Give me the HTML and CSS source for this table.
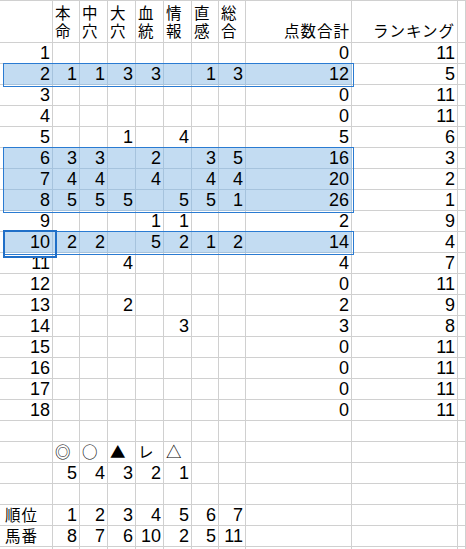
FILE: index.html
```html
<!DOCTYPE html>
<html lang="ja">
<head>
<meta charset="utf-8">
<link rel="stylesheet" href="styles.css">
</head>
<body>
<div class="sheet">
  <div class="row hdr">
    <span></span><span></span>
    <span class="h">本命</span><span class="h">中穴</span><span class="h">大穴</span><span class="h">血統</span><span class="h">情報</span><span class="h">直感</span><span class="h">総合</span>
    <span class="h hr">点数合計</span><span class="h hr hj">ランキング</span><span></span>
  </div>
  <div class="row"><span></span><span>1</span><span></span><span></span><span></span><span></span><span></span><span></span><span></span><span>0</span><span>11</span><span></span></div>
  <div class="grp">
    <div class="row sel"><span></span><span>2</span><span>1</span><span>1</span><span>3</span><span>3</span><span></span><span>1</span><span>3</span><span>12</span><span>5</span><span></span></div>
  </div>
  <div class="row"><span></span><span>3</span><span></span><span></span><span></span><span></span><span></span><span></span><span></span><span>0</span><span>11</span><span></span></div>
  <div class="row"><span></span><span>4</span><span></span><span></span><span></span><span></span><span></span><span></span><span></span><span>0</span><span>11</span><span></span></div>
  <div class="row"><span></span><span>5</span><span></span><span></span><span>1</span><span></span><span>4</span><span></span><span></span><span>5</span><span>6</span><span></span></div>
  <div class="grp">
    <div class="row sel"><span></span><span>6</span><span>3</span><span>3</span><span></span><span>2</span><span></span><span>3</span><span>5</span><span>16</span><span>3</span><span></span></div>
    <div class="row sel"><span></span><span>7</span><span>4</span><span>4</span><span></span><span>4</span><span></span><span>4</span><span>4</span><span>20</span><span>2</span><span></span></div>
    <div class="row sel"><span></span><span>8</span><span>5</span><span>5</span><span>5</span><span></span><span>5</span><span>5</span><span>1</span><span>26</span><span>1</span><span></span></div>
  </div>
  <div class="row"><span></span><span>9</span><span></span><span></span><span></span><span>1</span><span>1</span><span></span><span></span><span>2</span><span>9</span><span></span></div>
  <div class="grp">
    <div class="row sel"><span></span><span class="active">10</span><span>2</span><span>2</span><span></span><span>5</span><span>2</span><span>1</span><span>2</span><span>14</span><span>4</span><span></span></div>
  </div>
  <div class="row"><span></span><span>11</span><span></span><span></span><span>4</span><span></span><span></span><span></span><span></span><span>4</span><span>7</span><span></span></div>
  <div class="row"><span></span><span>12</span><span></span><span></span><span></span><span></span><span></span><span></span><span></span><span>0</span><span>11</span><span></span></div>
  <div class="row"><span></span><span>13</span><span></span><span></span><span>2</span><span></span><span></span><span></span><span></span><span>2</span><span>9</span><span></span></div>
  <div class="row"><span></span><span>14</span><span></span><span></span><span></span><span></span><span>3</span><span></span><span></span><span>3</span><span>8</span><span></span></div>
  <div class="row"><span></span><span>15</span><span></span><span></span><span></span><span></span><span></span><span></span><span></span><span>0</span><span>11</span><span></span></div>
  <div class="row"><span></span><span>16</span><span></span><span></span><span></span><span></span><span></span><span></span><span></span><span>0</span><span>11</span><span></span></div>
  <div class="row"><span></span><span>17</span><span></span><span></span><span></span><span></span><span></span><span></span><span></span><span>0</span><span>11</span><span></span></div>
  <div class="row"><span></span><span>18</span><span></span><span></span><span></span><span></span><span></span><span></span><span></span><span>0</span><span>11</span><span></span></div>
  <div class="row"><span></span><span></span><span></span><span></span><span></span><span></span><span></span><span></span><span></span><span></span><span></span><span></span></div>
  <div class="row"><span></span><span></span><span class="t">◎</span><span class="t">○</span><span class="t">▲</span><span class="t">レ</span><span class="t">△</span><span></span><span></span><span></span><span></span><span></span></div>
  <div class="row"><span></span><span></span><span>5</span><span>4</span><span>3</span><span>2</span><span>1</span><span></span><span></span><span></span><span></span><span></span></div>
  <div class="row"><span></span><span></span><span></span><span></span><span></span><span></span><span></span><span></span><span></span><span></span><span></span><span></span></div>
  <div class="row"><span></span><span class="t">順位</span><span>1</span><span>2</span><span>3</span><span>4</span><span>5</span><span>6</span><span>7</span><span></span><span></span><span></span></div>
  <div class="row"><span></span><span class="t">馬番</span><span>8</span><span>7</span><span>6</span><span>10</span><span>2</span><span>5</span><span>11</span><span></span><span></span><span></span></div>
  <div class="row"><span></span><span></span><span></span><span></span><span></span><span></span><span></span><span></span><span></span><span></span><span></span><span></span></div>
</div>
</body>
</html>
```

FILE: styles.css
```css
* { box-sizing: border-box; }

html, body {
  margin: 0;
  padding: 0;
  background: #ffffff;
}

body {
  font-family: "Liberation Sans", Arial, sans-serif;
  color: #000000;
}

.sheet {
  width: 466px;
  height: 549px;
  overflow: hidden;
  border-top: 1px solid #d0d0d0;
}

.row {
  display: grid;
  grid-template-columns: 3px 50px 27px 28px 28px 28px 28px 27px 27px 106px 106px 1fr;
  height: 21px;
}

.row > span {
  display: flex;
  align-items: flex-end;
  justify-content: flex-end;
  padding-right: 2px;
  border-right: 1px solid #d0d0d0;
  border-bottom: 1px solid #d0d0d0;
  font-size: 18px;
  line-height: 20px;
  white-space: nowrap;
}

.row > span:first-child {
  border-right: 0;
  padding: 0;
}

.hdr {
  height: 42px;
}

.hdr > span.h {
  justify-content: flex-start;
  padding: 0 0 3px 2px;
  white-space: normal;
  font-family: "Noto Sans CJK JP", sans-serif;
  font-size: 15.5px;
  letter-spacing: 1px;
  line-height: 18px;
}

.hdr > span.hr {
  justify-content: flex-end;
  padding: 0 1px 3px 0;
}

.hdr > span.hj {
  padding-right: 2px;
}

.row > span.t {
  justify-content: flex-start;
  padding: 0 0 2px 2px;
  font-family: "Noto Sans CJK JP", sans-serif;
  font-size: 15.5px;
  letter-spacing: 1px;
  line-height: 18px;
}

/* selection */
.sel > span:nth-child(n+2):nth-child(-n+10) {
  background: #c3dcf2;
  border-color: #a6c3dd;
}

.grp {
  position: relative;
}

.grp::after {
  content: "";
  position: absolute;
  left: 3px;
  top: -1px;
  width: 349px;
  height: calc(100% + 1px);
  border: 1px solid #2a7bd2;
  pointer-events: none;
}

.active {
  position: relative;
}

.active::after {
  content: "";
  position: absolute;
  left: 0;
  top: -2px;
  width: 50px;
  height: 24px;
  border: 2px solid #1f6fc8;
  z-index: 2;
}
```
